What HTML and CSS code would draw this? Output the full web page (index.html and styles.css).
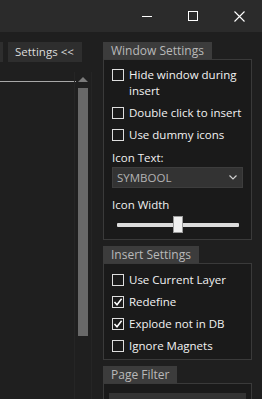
FILE: index.html
```html
<!DOCTYPE html>
<html>
<head>
<meta charset="utf-8">
<link rel="stylesheet" href="styles.css">
</head>
<body>
<div class="window">
  <div class="titlebar">
    <div class="cap">
      <svg width="10" height="10" viewBox="0 0 10 10"><line x1="0" y1="5.5" x2="10" y2="5.5" stroke="#fff" stroke-width="1"/></svg>
    </div>
    <div class="cap">
      <svg width="10" height="10" viewBox="0 0 10 10"><rect x="0.5" y="0.5" width="9" height="9" fill="none" stroke="#fff" stroke-width="1"/></svg>
    </div>
    <div class="cap">
      <svg width="11" height="11" viewBox="0 0 11 11"><path d="M0.5 0.5 L10.5 10.5 M10.5 0.5 L0.5 10.5" stroke="#fff" stroke-width="1.1" fill="none"/></svg>
    </div>
  </div>
  <div class="main">
    <div class="left">
      <div class="toolbar">
        <div class="tbtn partial"></div>
        <div class="tbtn">Settings &lt;&lt;</div>
      </div>
      <div class="list">
        <div class="list-content"><div class="list-head"></div></div>
        <div class="vscroll">
          <div class="arrow"></div>
          <div class="thumb"></div>
        </div>
      </div>
    </div>
    <div class="right">
      <section class="group">
        <div class="group-head">Window Settings</div>
        <div class="group-box window-box">
          <div class="check"><span class="box"></span><span class="label">Hide window during insert</span></div>
          <div class="check"><span class="box"></span><span class="label nowrap">Double click to insert</span></div>
          <div class="check"><span class="box"></span><span class="label nowrap">Use dummy icons</span></div>
          <div class="field-label">Icon Text:</div>
          <div class="combo">
            <span class="combo-text">SYMBOOL</span>
            <svg class="chev" width="8" height="5" viewBox="0 0 8 5"><path d="M0.5 0.5 L4 4 L7.5 0.5" stroke="#cfcfcf" stroke-width="1.2" fill="none"/></svg>
          </div>
          <div class="field-label slider-label">Icon Width</div>
          <div class="slider">
            <div class="track"></div>
            <div class="knob"></div>
          </div>
        </div>
      </section>
      <section class="group">
        <div class="group-head">Insert Settings</div>
        <div class="group-box insert-box">
          <div class="check"><span class="box"></span><span class="label nowrap">Use Current Layer</span></div>
          <div class="check"><span class="box checked"><svg width="10" height="10" viewBox="0 0 10 10"><path d="M1.5 5 L4 7.8 L8.6 1.8" stroke="#fff" stroke-width="1.5" fill="none"/></svg></span><span class="label nowrap">Redefine</span></div>
          <div class="check"><span class="box checked"><svg width="10" height="10" viewBox="0 0 10 10"><path d="M1.5 5 L4 7.8 L8.6 1.8" stroke="#fff" stroke-width="1.5" fill="none"/></svg></span><span class="label nowrap">Explode not in DB</span></div>
          <div class="check"><span class="box"></span><span class="label nowrap">Ignore Magnets</span></div>
        </div>
      </section>
      <section class="group">
        <div class="group-head">Page Filter</div>
        <div class="group-box filter-box">
          <div class="fbtn">Add to all</div>
        </div>
      </section>
    </div>
  </div>
</div>
</body>
</html>
```

FILE: styles.css
```css
html, body {
  margin: 0;
  padding: 0;
  background: #1f1f1f;
  overflow: hidden;
}
body {
  width: 262px;
  height: 399px;
  font-family: "Open Sans", "Noto Sans", sans-serif;
  font-size: 11.5px;
  color: #f0f0f0;
}
.window {
  width: 262px;
  height: 399px;
  display: flex;
  flex-direction: column;
  overflow: hidden;
}
.titlebar {
  height: 32px;
  flex: none;
  background: #2b2b2b;
  display: flex;
  justify-content: flex-end;
}
.cap {
  width: 46px;
  height: 32px;
  display: flex;
  align-items: center;
  justify-content: center;
}
.cap svg { display: block; }
.main {
  flex: 1;
  display: flex;
  padding-top: 10px;
  min-height: 0;
}
.left {
  width: 98px;
  flex: none;
  display: flex;
  flex-direction: column;
  overflow: hidden;
}
.toolbar {
  height: 20px;
  display: flex;
  justify-content: flex-end;
  gap: 5px;
  padding-right: 16px;
}
.tbtn {
  flex: none;
  height: 20px;
  line-height: 19px;
  background: #2e2e2e;
  color: #dcdcdc;
  font-size: 11.5px;
  padding: 0 7px;
  box-sizing: border-box;
  width: 74px;
  white-space: nowrap;
}
.tbtn.partial { width: 40px; }
.list {
  margin-top: 10px;
  flex: 1;
  display: flex;
}
.list-content {
  width: 76px;
  flex: none;
}
.list-head {
  height: 9px;
  border-bottom: 1px solid #a8a8a8;
}
.vscroll {
  width: 18px;
  box-sizing: border-box;
  border-left: 1px solid #252525;
  border-right: 1px solid #252525;
  display: flex;
  flex-direction: column;
  align-items: center;
  margin-left: -2px;
}
.arrow {
  margin-top: 5px;
  width: 0;
  height: 0;
  border-left: 5px solid transparent;
  border-right: 5px solid transparent;
  border-bottom: 5px solid #7a7a7a;
}
.thumb {
  margin-top: 6px;
  width: 10px;
  height: 248px;
  background: #686868;
}
.right {
  margin-left: 5px;
  width: 149px;
  flex: none;
  display: flex;
  flex-direction: column;
  gap: 6px;
}
.group-head {
  display: inline-block;
  height: 17px;
  line-height: 17px;
  padding: 0 8px;
  background: #3c3c3c;
  color: #b9b9b9;
  font-size: 12px;
  white-space: nowrap;
}
.group-box {
  border: 1px solid #3a3a3a;
  background: #1a1a1a;
  padding: 0 8px;
  display: flex;
  flex-direction: column;
}
.window-box {
  padding-top: 7px;
  padding-bottom: 6px;
  gap: 6px;
}
.insert-box {
  padding-top: 8px;
  padding-bottom: 5px;
  gap: 6px;
}
.filter-box {
  padding: 9px 5px 20px;
}
.check {
  display: flex;
  align-items: flex-start;
  line-height: 16px;
}
.box {
  flex: none;
  width: 12px;
  height: 12px;
  box-sizing: border-box;
  border: 1px solid #dedede;
  margin-top: 2px;
  margin-right: 5px;
  display: flex;
  align-items: center;
  justify-content: center;
}
.box svg { display: block; }
.label { color: #f2f2f2; }
.nowrap { white-space: nowrap; }
.field-label {
  line-height: 16px;
  margin-top: 1px;
}
.combo {
  margin-top: -5px;
  height: 21px;
  box-sizing: border-box;
  background: #333333;
  border: 1px solid #3d3d3d;
  display: flex;
  align-items: center;
  justify-content: space-between;
  padding: 0 5px 0 4px;
  color: #b4b4b4;
}
.chev { display: block; }
.slider-label { margin-top: 3px; }
.slider {
  margin-top: -3px;
  height: 17px;
  position: relative;
  display: flex;
  align-items: center;
  padding: 0 4px 0 5px;
}
.track {
  flex: 1;
  height: 4px;
  background: #dcdcdc;
  border-radius: 1px;
}
.knob {
  position: absolute;
  left: 61px;
  top: 0;
  width: 10px;
  height: 17px;
  box-sizing: border-box;
  background: #f0f0f0;
  border: 1px solid #9a9a9a;
}
.fbtn {
  height: 20px;
  background: #333333;
  text-align: center;
  color: #dcdcdc;
  line-height: 20px;
}
```
